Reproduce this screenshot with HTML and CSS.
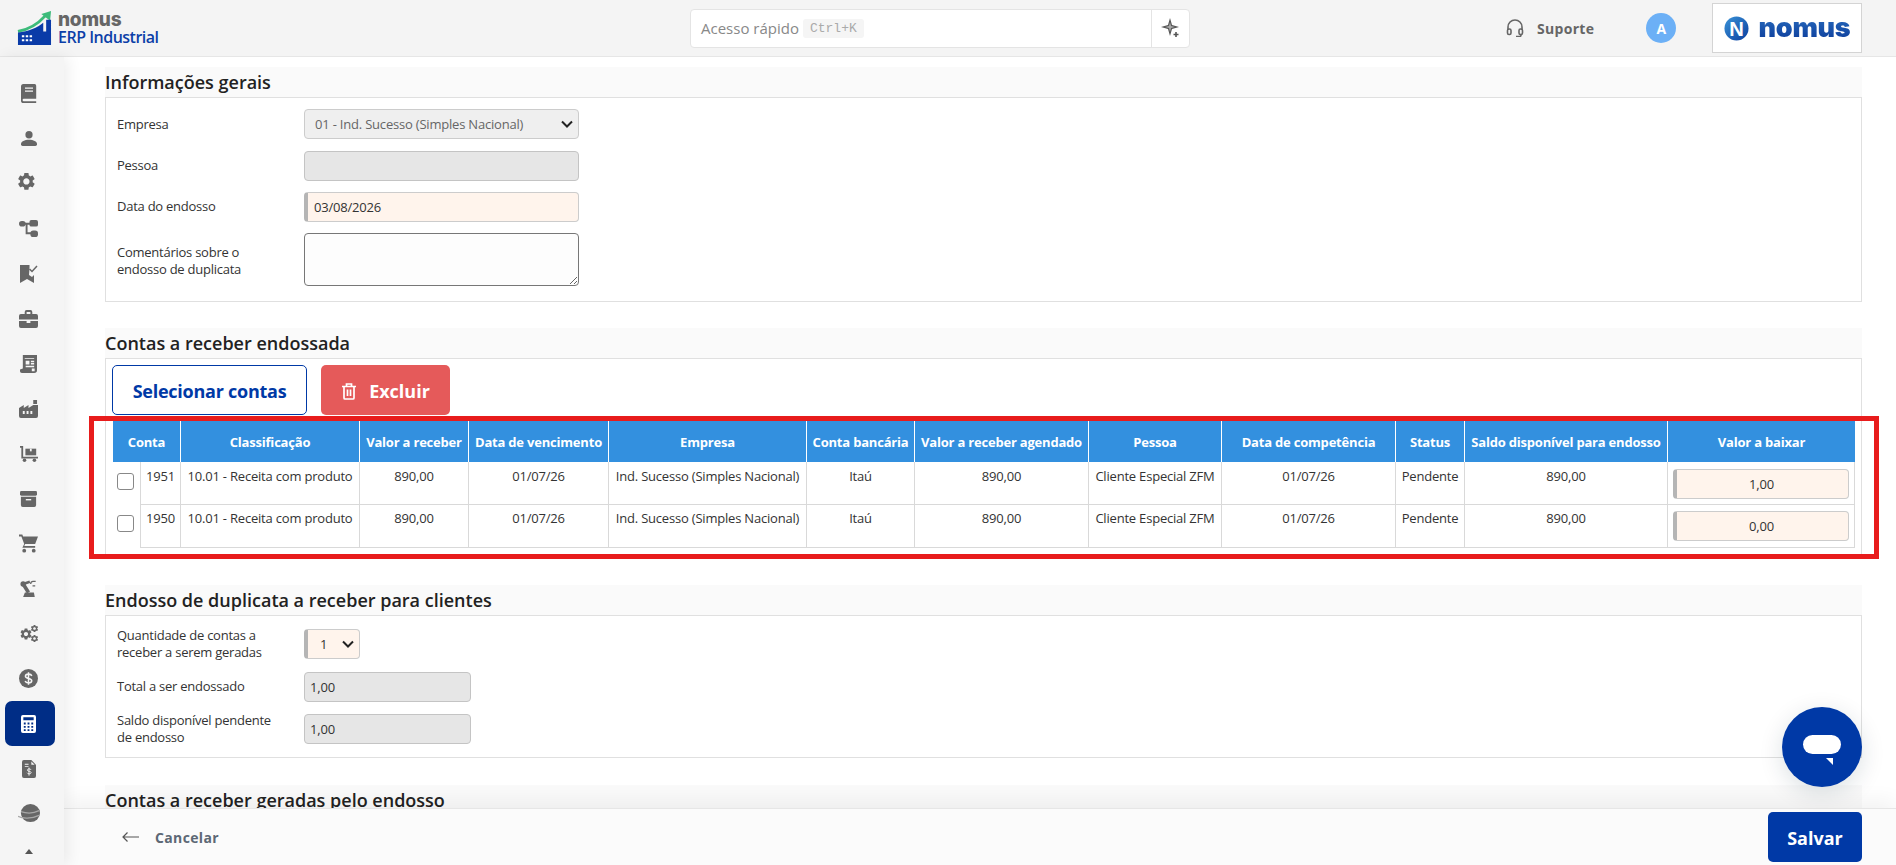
FILE: index.html
```html
<!DOCTYPE html>
<html lang="pt-BR">
<head>
<meta charset="UTF-8">
<title>Nomus ERP Industrial</title>
<link rel="stylesheet" href="styles.css">
</head>
<body>
<svg class="sprite" width="0" height="0">
    <symbol id="gear" viewBox="0 0 24 24">
        <path d="M19.14 12.94c.04-.3.06-.61.06-.94 0-.32-.02-.64-.07-.94l2.03-1.58c.18-.14.23-.41.12-.61l-1.92-3.32c-.12-.22-.37-.29-.59-.22l-2.39.96c-.5-.38-1.03-.7-1.62-.94l-.36-2.54c-.04-.24-.24-.41-.48-.41h-3.84c-.24 0-.43.17-.47.41l-.36 2.54c-.59.24-1.13.57-1.62.94l-2.39-.96c-.22-.08-.47 0-.59.22L2.74 8.87c-.12.21-.08.47.12.61l2.03 1.58c-.05.3-.09.63-.09.94s.02.64.07.94l-2.03 1.58c-.18.14-.23.41-.12.61l1.92 3.32c.12.22.37.29.59.22l2.39-.96c.5.38 1.03.7 1.62.94l.36 2.54c.05.24.24.41.48.41h3.84c.24 0 .44-.17.47-.41l.36-2.54c.59-.24 1.13-.56 1.62-.94l2.39.96c.22.08.47 0 .59-.22l1.92-3.32c.12-.22.07-.47-.12-.61l-2.01-1.58zM12 15.6c-1.98 0-3.6-1.62-3.6-3.6s1.62-3.6 3.6-3.6 3.6 1.62 3.6 3.6-1.62 3.6-3.6 3.6z"/>
    </symbol>
    <linearGradient id="logo-blue" x1="0" y1="0" x2="1" y2="1">
        <stop offset="0" stop-color="#3a93d8"/>
        <stop offset="1" stop-color="#0b3f9e"/>
    </linearGradient>
</svg>

<header class="topbar">
    <div class="brand">
        <svg class="brand-mark" width="35" height="35" viewBox="0 0 36 36">
            <path d="M1 21 C12 19 21 14 29 5" fill="none" stroke="#3dbb7a" stroke-width="3"/>
            <path d="M25 3 L35 0 L34 10 Z" fill="#3dbb7a"/>
            <path d="M1 22 C12 21 21 17 27 12 V21 H30 V9 H35 V35 H1 Z" fill="#0a3ba8"/>
            <path d="M5 25h2.500v2h-2.500zM9 25h2.500v2h-2.500zM13 25h2.500v2h-2.500zM5 29h2.500v2h-2.500zM9 29h2.500v2h-2.500zM13 29h2.500v2h-2.500z" fill="#fff"/>
        </svg>
        <div class="brand-text">
            <div class="brand-name">nomus</div>
            <div class="brand-sub">ERP Industrial</div>
        </div>
    </div>

    <div class="quick">
        <div class="quick-field">
            <span>Acesso rápido</span>
            <kbd class="quick-key">Ctrl+K</kbd>
        </div>
        <div class="quick-btn">
            <svg width="20" height="20" viewBox="0 0 20 20" fill="#555">
                <path d="M9 0 L11 7 L18 9 L11 11 L9 18 L7 11 L0 9 L7 7 Z"/>
                <path d="M9 4 L10 8 L14 9 L10 10 L9 14 L8 10 L4 9 L8 8 Z" fill="#aaa"/>
                <path d="M14.200 14h1.600v1.700h1.700v1.600h-1.700V19h-1.600v-1.700h-1.700v-1.600h1.700z"/>
            </svg>
        </div>
    </div>

    <div class="support">
        <svg width="18" height="18" viewBox="0 0 18 18" fill="none" stroke="#666" stroke-width="1.600">
            <path d="M2 11V8a7 7 0 0 1 14 0v3"/>
            <rect x="1.500" y="10" width="3.500" height="5.500" rx="1.500"/>
            <rect x="13" y="10" width="3.500" height="5.500" rx="1.500"/>
            <path d="M15 15.500v.5a1.500 1.500 0 0 1-1.500 1.500H10"/>
        </svg>
        <span>Suporte</span>
    </div>
    <div class="avatar">A</div>
    <div class="company-logo">
        <svg width="25" height="25" viewBox="0 0 26 26">
            <circle cx="13" cy="13" r="12.500" fill="url(#logo-blue)"/>
            <text x="13" y="20.500" text-anchor="middle" class="company-logo-n">N</text>
        </svg>
        <span class="company-logo-text">nomus</span>
    </div>
</header>

<div class="layout">
    <nav class="sidebar">
        <a class="side-item">
            <svg width="16" height="19" viewBox="0 0 20 22" preserveAspectRatio="none"><path d="M3 0h14a2 2 0 0 1 2 2v15H3.500a1.500 1.500 0 0 0 0 3H19v2H3a3 3 0 0 1-3-3V3a3 3 0 0 1 3-3z"/><path d="M5 4h10v1.500H5zM5 7.500h10V9H5z" fill="#f5f5f5"/></svg>
        </a>
        <a class="side-item">
            <svg width="16" height="15" viewBox="0 0 20 18" preserveAspectRatio="none"><circle cx="10" cy="4.500" r="4.500"/><path d="M0 15.500C0 12.500 4.500 10.500 10 10.500s10 2 10 5V16a2 2 0 0 1-2 2H2a2 2 0 0 1-2-2z"/></svg>
        </a>
        <a class="side-item">
            <svg width="21" height="21" viewBox="2 2 20 20"><use href="#gear"/></svg>
        </a>
        <a class="side-item">
            <svg width="19" height="17" viewBox="0 0 20 18" preserveAspectRatio="none"><rect x="0" y="1" width="7" height="6" rx="3"/><rect x="11" y="0" width="9" height="7" rx="2"/><rect x="12" y="11" width="8" height="7" rx="3"/><path d="M5 3h7v2H9v8h4v2H7V5H5z"/></svg>
        </a>
        <a class="side-item">
            <svg width="18" height="18" viewBox="0 0 18 18"><path d="M0 0h9.500v3l-.5 7 3 2 2-2v8l-7-4-7 4z"/><path d="M9.500 4l2.500 2.500L17 1" fill="none" stroke="#666" stroke-width="1.500"/></svg>
        </a>
        <a class="side-item">
            <svg width="19" height="18" viewBox="0 0 20 18" preserveAspectRatio="none"><path d="M6 4V2a2 2 0 0 1 2-2h4a2 2 0 0 1 2 2v2h4a2 2 0 0 1 2 2v3.500H0V6a2 2 0 0 1 2-2zm2 0h4V2H8z"/><path d="M0 11h8v2h4v-2h8v5a2 2 0 0 1-2 2H2a2 2 0 0 1-2-2z"/></svg>
        </a>
        <a class="side-item">
            <svg width="17" height="18" viewBox="0 0 18 20" preserveAspectRatio="none"><path d="M3 0h15v17a3 3 0 0 1-3 3H2a2 2 0 0 1-2-2v-2l3-1z"/><path d="M5 3.500h10v1H5zM6 6.500h4v4H6zM11.500 6.500H15V8h-3.500zM11.500 9H15v1.500h-3.500zM6 12h9v1.500H6zM12.500 15h3v3h-3z" fill="#f5f5f5"/></svg>
        </a>
        <a class="side-item">
            <svg width="19" height="18" viewBox="0 0 20 18" preserveAspectRatio="none"><path d="M15 0h4v4h-4zM15 5h5v11a2 2 0 0 1-2 2H2a2 2 0 0 1-2-2V8l5-3v3l5-3v3l5-3z"/><path d="M4 11h2v3H4zM8 11h2v3H8zM12 11h2v3h-2z" fill="#f5f5f5"/></svg>
        </a>
        <a class="side-item">
            <svg width="18" height="16" viewBox="0 0 20 18" preserveAspectRatio="none"><path d="M0 0h3.500v12H20v2H1.500V2H0z"/><path d="M6 3h12v7.500H6z"/><path d="M11 3h2v3h-2z" fill="#f5f5f5"/><circle cx="5" cy="16" r="2"/><circle cx="16" cy="16" r="2"/></svg>
        </a>
        <a class="side-item">
            <svg width="17" height="16" viewBox="0 0 19 17" preserveAspectRatio="none"><rect width="19" height="5" rx="1.500"/><path d="M1 6h17v9a2 2 0 0 1-2 2H3a2 2 0 0 1-2-2z"/><path d="M6.500 8.500h6V10h-6z" fill="#f5f5f5"/></svg>
        </a>
        <a class="side-item">
            <svg width="19" height="19" viewBox="0 0 20 19"><path d="M0 0h3.500l.8 2H20l-3 8H6.500l-1 2H17v2H3.500l2-4L2.500 2H0z"/><circle cx="5.500" cy="17" r="2"/><circle cx="15.500" cy="17" r="2"/></svg>
        </a>
        <a class="side-item">
            <svg width="17" height="17" viewBox="0 0 19 19" preserveAspectRatio="none">
                <circle cx="3.500" cy="4.500" r="3"/>
                <path d="M3.500 4.500L9.500 14" fill="none" stroke="#666" stroke-width="4"/>
                <path d="M3.500 4.500L11 2" fill="none" stroke="#666" stroke-width="3"/>
                <path d="M17.500 1.500h-3a2.500 2.500 0 0 0-2.500 2.500v.5M17 6.500h-3" fill="none" stroke="#666" stroke-width="1.500"/>
                <path d="M3.500 19h13l-1-5h-10z"/>
            </svg>
        </a>
        <a class="side-item">
            <svg width="20" height="19" viewBox="0 0 20 19">
                <use href="#gear" x="0" y="3" width="14" height="14"/>
                <use href="#gear" x="11" y="0" width="9" height="9"/>
                <use href="#gear" x="11" y="10" width="9" height="9"/>
            </svg>
        </a>
        <a class="side-item">
            <svg width="19" height="19" viewBox="0 0 20 20">
                <circle cx="10" cy="10" r="10"/>
                <path d="M13.500 7.200C13 6 11.700 5.400 10 5.400c-1.800 0-3.200.9-3.200 2.300 0 3.200 6.600 1.500 6.600 4.700 0 1.400-1.500 2.300-3.400 2.300-1.800 0-3.100-.7-3.600-2M10 3.500v13" fill="none" stroke="#f5f5f5" stroke-width="1.600"/>
            </svg>
        </a>
        <a class="side-item side-item-active">
            <svg width="15" height="18" viewBox="0 0 16 19" preserveAspectRatio="none"><rect width="16" height="19" rx="2" fill="#fff"/><path d="M2.500 2.500h11v3h-11zM3 8h2v2H3zM7 8h2v2H7zM11 8h2v2h-2zM3 11.500h2v2H3zM7 11.500h2v2H7zM11 11.500h2v2h-2zM3 15h2v2H3zM7 15h2v2H7zM11 15h2v2h-2z" fill="#002d86"/></svg>
        </a>
        <a class="side-item">
            <svg width="14" height="18" viewBox="0 0 15 19" preserveAspectRatio="none"><path d="M2 0h8l5 5v12a2 2 0 0 1-2 2H2a2 2 0 0 1-2-2V2a2 2 0 0 1 2-2z"/><path d="M3 4h4v1H3zM3 6.500h4v1H3zM10 1.500V5h3.500z" fill="#f5f5f5"/><path d="M7.500 8v8.500" stroke="#f5f5f5"/><path d="M9.800 10.500C9.500 9.800 8.700 9.400 7.700 9.400c-1.100 0-1.900.5-1.900 1.300 0 1.800 4 .8 4 2.600 0 .8-.9 1.300-2.100 1.300-1.100 0-1.900-.4-2.200-1.100" fill="none" stroke="#f5f5f5"/></svg>
        </a>
        <a class="side-item">
            <svg width="22" height="19" viewBox="0 0 23 20" preserveAspectRatio="none"><ellipse cx="13" cy="9.500" rx="10" ry="9.500"/><path d="M0 13c4 2.500 14 3 22-1M3 8c6 2 13 2 19-1" fill="none" stroke="#a8a8a8" stroke-width="1.300"/></svg>
        </a>
        <span class="side-caret"></span>
    </nav>

    <div class="page">
        <main class="content">
            <section class="section section-general">
                <h2 class="section-title">Informações gerais</h2>
                <div class="section-box form-box">
                    <div class="form-row form-row-first">
                        <label class="form-label form-label-flat">Empresa</label>
                        <select class="field field-wide field-readonly">
                            <option>01 - Ind. Sucesso (Simples Nacional)</option>
                        </select>
                    </div>
                    <div class="form-row">
                        <label class="form-label">Pessoa</label>
                        <input class="field field-wide field-disabled" type="text">
                    </div>
                    <div class="form-row">
                        <label class="form-label">Data do endosso</label>
                        <input class="field field-wide field-required" type="text" value="03/08/2026">
                    </div>
                    <div class="form-row">
                        <label class="form-label form-label-low">Comentários sobre o endosso de duplicata</label>
                        <textarea class="field field-wide field-text"></textarea>
                    </div>
                </div>
            </section>

            <section class="section section-accounts">
                <h2 class="section-title">Contas a receber endossada</h2>
                <div class="section-box accounts-box">
                    <div class="actions">
                        <button class="btn btn-outline">Selecionar contas</button>
                        <button class="btn btn-danger">
                            <svg width="16" height="17" viewBox="0 0 16 17" fill="none" stroke="#fff" stroke-width="1.700">
                                <path d="M1 3.500h14M5.500 3V1h5v2M3 3.500V15a1 1 0 0 0 1 1h8a1 1 0 0 0 1-1V3.500M6.500 6.500v6.500M9.500 6.500v6.500"/>
                            </svg>
                            Excluir
                        </button>
                    </div>
                    <div class="table-wrap">
                        <table class="grid">
                            <colgroup>
                                <col class="col-check"><col class="col-conta"><col class="col-class"><col class="col-valor">
                                <col class="col-venc"><col class="col-empresa"><col class="col-banco"><col class="col-agendado">
                                <col class="col-pessoa"><col class="col-comp"><col class="col-status"><col class="col-saldo"><col class="col-baixar">
                            </colgroup>
                            <thead>
                                <tr>
                                    <th colspan="2">Conta</th>
                                    <th>Classificação</th>
                                    <th>Valor a receber</th>
                                    <th>Data de vencimento</th>
                                    <th>Empresa</th>
                                    <th>Conta bancária</th>
                                    <th>Valor a receber agendado</th>
                                    <th>Pessoa</th>
                                    <th>Data de competência</th>
                                    <th>Status</th>
                                    <th>Saldo disponível para endosso</th>
                                    <th>Valor a baixar</th>
                                </tr>
                            </thead>
                            <tbody>
                                <tr>
                                    <td class="cell-check"><input class="check" type="checkbox"></td>
                                    <td class="cell-first">1951</td>
                                    <td>10.01 - Receita com produto</td>
                                    <td>890,00</td>
                                    <td>01/07/26</td>
                                    <td>Ind. Sucesso (Simples Nacional)</td>
                                    <td>Itaú</td>
                                    <td>890,00</td>
                                    <td>Cliente Especial ZFM</td>
                                    <td>01/07/26</td>
                                    <td>Pendente</td>
                                    <td>890,00</td>
                                    <td class="cell-input"><input class="field field-required field-amount" type="text" value="1,00"></td>
                                </tr>
                                <tr>
                                    <td class="cell-check"><input class="check" type="checkbox"></td>
                                    <td class="cell-first">1950</td>
                                    <td>10.01 - Receita com produto</td>
                                    <td>890,00</td>
                                    <td>01/07/26</td>
                                    <td>Ind. Sucesso (Simples Nacional)</td>
                                    <td>Itaú</td>
                                    <td>890,00</td>
                                    <td>Cliente Especial ZFM</td>
                                    <td>01/07/26</td>
                                    <td>Pendente</td>
                                    <td>890,00</td>
                                    <td class="cell-input"><input class="field field-required field-amount" type="text" value="0,00"></td>
                                </tr>
                            </tbody>
                        </table>
                        <div class="highlight"></div>
                    </div>
                </div>
            </section>

            <section class="section section-endorse">
                <h2 class="section-title">Endosso de duplicata a receber para clientes</h2>
                <div class="section-box form-box form-box-tight">
                    <div class="form-row form-row-first">
                        <label class="form-label">Quantidade de contas a receber a serem geradas</label>
                        <select class="field field-small field-required">
                            <option>1</option>
                        </select>
                    </div>
                    <div class="form-row">
                        <label class="form-label">Total a ser endossado</label>
                        <input class="field field-mid field-disabled" type="text" value="1,00">
                    </div>
                    <div class="form-row">
                        <label class="form-label">Saldo disponível pendente de endosso</label>
                        <input class="field field-mid field-disabled" type="text" value="1,00">
                    </div>
                </div>
            </section>

            <section class="section">
                <h2 class="section-title">Contas a receber geradas pelo endosso</h2>
            </section>
        </main>

        <footer class="footer">
            <a class="cancel">
                <svg width="17" height="10" viewBox="0 0 17 10" fill="none" stroke="#555" stroke-width="1.200"><path d="M17 5H1M5.500.5L1 5l4.500 4.500"/></svg>
                <span>Cancelar</span>
            </a>
            <button class="btn btn-primary">Salvar</button>
        </footer>

        <div class="chat">
            <span class="chat-bubble"></span>
            <span class="chat-tail"></span>
        </div>
    </div>
</div>
</body>
</html>
```

FILE: styles.css
```css
* {
    box-sizing: border-box;
}

body {
    margin: 0;
    height: 865px;
    overflow: hidden;
    font-family: "Open Sans", sans-serif;
    font-size: 13px;
    color: #333;
    background-color: #fff;
}

.sprite {
    position: absolute;
}

/* top bar */
.topbar {
    display: flex;
    align-items: center;
    height: 57px;
    padding-right: 34px;
    background-color: #f4f4f4;
    border-bottom: 1px solid #e6e6e6;
}

.brand {
    display: flex;
    align-items: center;
    width: 690px;
    padding-left: 17px;
}

.brand-mark {
    margin-right: 6px;
}

.brand-name {
    height: 18px;
    font-family: "Inter", sans-serif;
    font-size: 19px;
    font-weight: 800;
    color: #666;
    line-height: 20px;
    letter-spacing: -0.2px;
}

.brand-sub {
    font-size: 16px;
    font-weight: 600;
    color: #0c3fa8;
    letter-spacing: -0.5px;
    line-height: 18px;
}

.quick {
    display: flex;
    width: 500px;
    height: 39px;
    background-color: #fff;
    border: 1px solid #e4e4e4;
    border-radius: 4px;
}

.quick-field {
    flex: 1;
    display: flex;
    align-items: center;
    padding-left: 10px;
    font-size: 15px;
    color: #888;
}

.quick-key {
    margin-left: 4px;
    padding: 2px 7px;
    font-family: "Liberation Mono", monospace;
    font-size: 13px;
    color: #aaa;
    background-color: #f5f5f5;
    border-radius: 3px;
}

.quick-btn {
    display: flex;
    align-items: center;
    justify-content: center;
    width: 38px;
    border-left: 1px solid #e4e4e4;
}

.support {
    display: flex;
    align-items: center;
    margin-left: 316px;
    font-size: 14px;
    font-weight: 700;
    letter-spacing: 0.3px;
    color: #666;
}

.support span {
    margin-left: 13px;
}

.avatar {
    display: flex;
    align-items: center;
    justify-content: center;
    width: 30px;
    height: 30px;
    margin-left: 52px;
    font-size: 14px;
    font-weight: 700;
    color: #fff;
    background-color: #6cb0f6;
    border-radius: 50%;
}

.company-logo {
    display: flex;
    align-items: center;
    justify-content: center;
    width: 150px;
    height: 50px;
    margin-left: auto;
    background-color: #fff;
    border: 1px solid #d4d4d4;
}

.company-logo-n {
    font-family: "Liberation Sans", sans-serif;
    font-size: 21px;
    font-weight: 700;
    fill: #fff;
}

.company-logo-text {
    margin-left: 10px;
    font-family: "Inter", sans-serif;
    font-size: 27px;
    font-weight: 900;
    line-height: 30px;
    letter-spacing: -0.3px;
    color: #0f479f;
    background: linear-gradient(#2a6fc0, #0b3a99);
    -webkit-background-clip: text;
    background-clip: text;
    -webkit-text-fill-color: transparent;
}

/* layout */
.layout {
    display: flex;
    height: 808px;
}

.sidebar {
    position: relative;
    z-index: 2;
    flex: none;
    display: flex;
    flex-direction: column;
    align-items: center;
    width: 64px;
    padding: 14px 4px 0 0;
    background-color: #f5f5f5;
    box-shadow: 4px 0 14px rgba(0, 0, 0, 0.07);
}

.side-item {
    display: flex;
    align-items: center;
    justify-content: center;
    flex: none;
    width: 50px;
    height: 45px;
    padding-right: 3px;
}

.side-item svg {
    fill: #666;
}

.side-item-active {
    background-color: #002d86;
    border-radius: 7px;
}

.side-caret {
    width: 0;
    height: 0;
    margin-top: 13px;
    margin-right: 3px;
    border-left: 4px solid transparent;
    border-right: 4px solid transparent;
    border-bottom: 5px solid #555;
}

.page {
    position: relative;
    flex: 1;
    min-width: 0;
    display: flex;
    flex-direction: column;
}

.content {
    flex: 1;
    min-height: 0;
    overflow: hidden;
    padding: 10px 34px 0 41px;
}

/* sections */
.section {
    margin-bottom: 26px;
}

.section-accounts {
    margin-bottom: 30px;
}

.section-endorse {
    margin-bottom: 27px;
}

.section-title {
    height: 30px;
    margin: 0;
    font-size: 18px;
    font-weight: 600;
    line-height: 30px;
    color: #222;
    background-color: #fafafa;
}

.section-box {
    background-color: #fff;
    border: 1px solid #e0e0e0;
}

/* forms */
.form-box {
    display: flex;
    flex-direction: column;
    gap: 11px;
    padding: 11px 11px 15px;
}

.form-box-tight {
    gap: 12px;
    padding-top: 13px;
    padding-bottom: 13px;
}

.form-row {
    display: flex;
    align-items: center;
}

.form-box-tight .form-row {
    height: 30px;
}

.form-row-first {
    margin-bottom: 1px;
}

.form-label {
    flex: none;
    width: 187px;
    padding-right: 25px;
    padding-bottom: 1px;
    line-height: 17px;
    letter-spacing: -0.25px;
    color: #333;
}

.form-label-flat {
    padding-bottom: 0;
}

.form-label-low {
    padding-bottom: 0;
    padding-top: 2px;
}

.field {
    height: 30px;
    padding: 0 8px;
    font-family: "Open Sans", sans-serif;
    font-size: 13px;
    letter-spacing: -0.2px;
    color: #333;
    background-color: #f0f0f0;
    border: 1px solid #ccc;
    border-radius: 4px;
    outline: none;
}

select.field {
    appearance: none;
    background-repeat: no-repeat;
    background-position: right 5px center;
    background-size: 12px 8px;
    background-image: url("data:image/svg+xml,%3Csvg xmlns='http://www.w3.org/2000/svg' viewBox='0 0 12 8'%3E%3Cpath d='M1 1.500l5 5 5-5' fill='none' stroke='%23222' stroke-width='2'/%3E%3C/svg%3E");
}

.field-wide {
    width: 275px;
}

.field-mid {
    width: 167px;
}

.field-small {
    width: 56px;
}

select.field-readonly {
    padding-left: 10px;
    color: #666;
    background-color: #efefef;
}

.field-disabled {
    background-color: #e6e6e6;
    padding-left: 5px;
    border-color: #c4c4c4;
}

.field-required {
    background-color: #fff4ec;
    border-left: 4px solid #b5b5b5;
    padding-left: 6px;
}

select.field-small {
    padding-left: 12px;
    background-position: right 5px center;
    background-color: #fff4ec;
}

.field-text {
    display: block;
    height: 53px;
    padding: 6px 8px;
    background-color: #fdfdfd;
    border-color: #777;
}

.field-amount {
    display: block;
    width: 100%;
    text-align: center;
}

/* accounts */
.accounts-box {
    padding: 6px;
}

.actions {
    display: flex;
    gap: 14px;
    margin-bottom: 6px;
}

.btn {
    display: flex;
    align-items: center;
    justify-content: center;
    height: 50px;
    padding: 2px 0 0;
    font-family: "Open Sans", sans-serif;
    font-size: 18px;
    font-weight: 700;
    border-radius: 5px;
    cursor: pointer;
}

.btn-outline {
    width: 195px;
    color: #0039a6;
    background-color: #fff;
    border: 1px solid #0039a6;
    letter-spacing: -0.25px;
}

.btn-danger {
    gap: 12px;
    width: 129px;
    color: #fff;
    background-color: #e55a5a;
    border: none;
}

.btn-primary {
    width: 94px;
    color: #fff;
    background-color: #0039a6;
    border: none;
}

.table-wrap {
    position: relative;
    margin-left: 1px;
    width: 1742px;
}

.grid {
    width: 1742px;
    table-layout: fixed;
    border-collapse: separate;
    border-spacing: 0;
}

.col-check { width: 27px; }
.col-conta { width: 41px; }
.col-class { width: 179px; }
.col-valor { width: 109px; }
.col-venc { width: 140px; }
.col-empresa { width: 198px; }
.col-banco { width: 108px; }
.col-agendado { width: 174px; }
.col-pessoa { width: 133px; }
.col-comp { width: 174px; }
.col-status { width: 69px; }
.col-saldo { width: 203px; }
.col-baixar { width: 187px; }

.grid th {
    height: 41px;
    padding: 0;
    font-size: 13px;
    font-weight: 700;
    letter-spacing: -0.2px;
    color: #fff;
    text-align: center;
    background-color: #3390df;
    border-right: 1px solid #fff;
}

.grid th:last-child {
    border-right: none;
}

.grid td {
    height: 43px;
    padding: 6px 0 0;
    line-height: 17px;
    letter-spacing: -0.2px;
    text-align: center;
    vertical-align: top;
    color: #333;
    border-right: 1px solid #d9d9d9;
    border-bottom: 1px solid #d9d9d9;
    white-space: nowrap;
}

.grid tr + tr td {
    padding-top: 5px;
}

.grid td.cell-check {
    padding: 11px 0 0 4px;
    text-align: left;
    border-right: none;
    border-bottom: none;
}

.grid tr + tr td.cell-check {
    padding-top: 10px;
}

.grid td.cell-first {
    border-left: 1px solid #d9d9d9;
}

.grid td.cell-input {
    padding: 7px 5px 0 5px;
}

.grid tr + tr td.cell-input {
    padding-top: 6px;
}

.check {
    display: block;
    width: 17px;
    height: 17px;
    margin: 0;
    appearance: none;
    background-color: #fff;
    border: 1px solid #888;
    border-radius: 3px;
}

/* annotation drawn over the screenshot */
.highlight {
    position: absolute;
    top: -5px;
    left: -24px;
    right: -24px;
    bottom: -11px;
    border: 5px solid #e81c1c;
    pointer-events: none;
}

/* footer */
.footer {
    position: relative;
    z-index: 1;
    flex: none;
    display: flex;
    align-items: center;
    justify-content: space-between;
    height: 57px;
    padding: 0 34px 0 58px;
    background-color: #fbfbfb;
    border-top: 1px solid #e6e6e6;
    box-shadow: 0 -8px 20px rgba(0, 0, 0, 0.05);
}

.cancel {
    display: flex;
    align-items: center;
    gap: 16px;
    font-size: 14px;
    font-weight: 700;
    letter-spacing: 0.35px;
    color: #5d6875;
}

.chat {
    position: absolute;
    z-index: 3;
    right: 34px;
    bottom: 78px;
    width: 80px;
    height: 80px;
    background-color: #0039a6;
    border-radius: 50%;
    box-shadow: 0 6px 24px rgba(0, 40, 60, 0.14);
}

.chat-bubble {
    position: absolute;
    top: 28px;
    left: 21px;
    width: 38px;
    height: 19px;
    background-color: #fff;
    border-radius: 10px;
}

.chat-tail {
    position: absolute;
    top: 51px;
    left: 44px;
    width: 0;
    height: 0;
    border-top: 7px solid #fff;
    border-left: 7px solid transparent;
}
```
